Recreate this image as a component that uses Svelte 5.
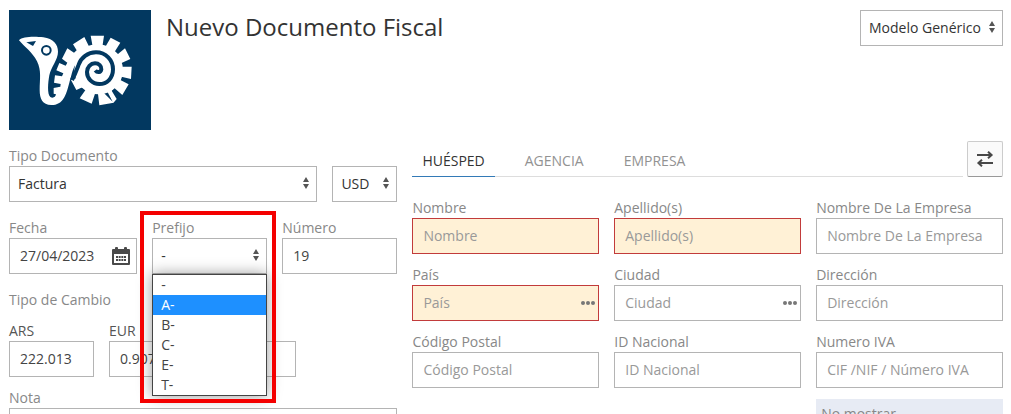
<script>
  const prefixes = ['-', 'A-', 'B-', 'C-', 'E-', 'T-'];
  let prefix = $state('-');
  let highlighted = $state('A-');
  let tab = $state('HUÉSPED');
  const tabs = ['HUÉSPED', 'AGENCIA', 'EMPRESA'];
  const guestFields = [
    { id: 'nombre', label: 'Nombre', required: true },
    { id: 'apellidos', label: 'Apellido(s)', required: true },
    { id: 'empresa', label: 'Nombre De La Empresa' },
    { id: 'pais', label: 'País', required: true, lookup: true },
    { id: 'ciudad', label: 'Ciudad', lookup: true },
    { id: 'direccion', label: 'Dirección' },
    { id: 'postal', label: 'Código Postal' },
    { id: 'nacional', label: 'ID Nacional' },
    { id: 'iva', label: 'Numero IVA', placeholder: 'CIF /NIF / Número IVA' }
  ];
</script>

<main>
  <header>
    <svg class="logo" viewBox="27 30 426 360" aria-hidden="true">
      <rect x="27" y="30" width="426" height="360" fill="#023860" />
      <path
        fill="#fff"
        d="M57 121C68 108 108 110 130 112C160 116 174 134 174 155C174 180 153 200 148 226C144 248 141 283 151 291C159 296 167 291 168 283L161 281L161 264L181 260L182 252L162 248L165 226L186 229L190 220L169 211L178 189L197 197L202 188L186 176L202 145L222 158L230 151L219 133L253 111L266 137L277 134L272 107L312 107L308 134L318 137L332 113L361 128L345 154L354 162L375 145L391 177L363 190L366 200L395 200L393 237L364 230L361 240L386 253L367 285L343 264L335 272L350 297L340 309L321 273L311 278L341 308L298 316L294 282L285 281L275 311L239 295L258 268L249 261L229 270L213 240L236 232C232 197 249 171 278 167C220 170 220 210 208 248C198 285 190 315 154 315C127 315 119 296 119 270C119 238 125 212 111 184C96 155 75 143 57 121Z"
      />
      <circle cx="296" cy="210" r="73" fill="#fff" />
      <path
        d="M216 240C226 222 230 210 236 194C243 173 263 157 288 157C318 157 339 180 339 208C339 235 321 252 298 252C276 252 261 235 261 216C261 201 272 190 285 190C297 190 305 198 304 208C302 218 292 219 286 211"
        fill="none"
        stroke="#023860"
        stroke-width="12"
      />
      <path d="M79 127L108 123L99 138Z" fill="#023860" />
      <circle cx="139" cy="151" r="13" fill="#fff" stroke="#023860" stroke-width="6" />
    </svg>
    <h1>Nuevo Documento Fiscal</h1>
    <select class="model" aria-label="Modelo"><option>Modelo Genérico</option></select>
  </header>

  <div class="columns">
    <section class="document">
      <div class="row type">
        <div class="field">
          <label for="tipo">Tipo Documento</label>
          <select id="tipo"><option>Factura</option></select>
        </div>
        <select class="currency" aria-label="Moneda"><option>USD</option></select>
      </div>

      <div class="row number">
        <div class="field">
          <label for="fecha">Fecha</label>
          <div class="control">
            <input id="fecha" value="27/04/2023" />
            <button class="inside calendar" aria-label="Calendario">
              <svg width="18" height="18" viewBox="0 0 18 18">
                <path
                  fill="#4a4a4a"
                  fill-rule="evenodd"
                  d="M1 2H3V1Q3 0 4 0H5Q6 0 6 1V2H12V1Q12 0 13 0H14Q15 0 15 1V2H17Q18 2 18 3V17Q18 18 17 18H1Q0 18 0 17V3Q0 2 1 2ZM2 7V16H16V7Z"
                />
                <path d="M4 10H14M4 13H14" stroke="#4a4a4a" stroke-width="2" stroke-dasharray="2 0.67" />
              </svg>
            </button>
          </div>
        </div>
        <div class="field prefix">
          <label for="prefijo">Prefijo</label>
          <select id="prefijo" bind:value={prefix}>
            {#each prefixes as p}<option>{p}</option>{/each}
          </select>
          <div class="menu" role="listbox" aria-label="Prefijo">
            {#each prefixes as p}
              <button
                role="option"
                aria-selected={p === prefix}
                class:highlighted={p === highlighted}
                onmouseenter={() => (highlighted = p)}
                onclick={() => (prefix = p)}>{p}</button>
            {/each}
          </div>
          <div class="frame"></div>
        </div>
        <div class="field">
          <label for="numero">Número</label>
          <input id="numero" value="19" />
        </div>
      </div>

      <h2>Tipo de Cambio</h2>
      <div class="row rates">
        <div class="field dark">
          <label for="ars">ARS</label>
          <input id="ars" value="222.013" />
        </div>
        <div class="field dark">
          <label for="eur">EUR</label>
          <input id="eur" value="0.907" />
        </div>
      </div>

      <div class="field note">
        <label for="nota">Nota</label>
        <textarea id="nota" rows="3"></textarea>
      </div>
    </section>

    <section class="customer">
      <div class="tabbar">
        <div class="tabs" role="tablist">
          {#each tabs as t}
            <button role="tab" aria-selected={t === tab} class:active={t === tab} onclick={() => (tab = t)}>{t}</button>
          {/each}
        </div>
        <button class="swap" aria-label="Intercambiar">
          <svg width="18" height="16" viewBox="0 0 18 16" fill="none" stroke="#484848" stroke-width="2">
            <path d="M1 4H16M12 0.700L15.600 4L12 7.300M17 12H2M6 8.700L2.400 12L6 15.300" />
          </svg>
        </button>
      </div>
      <div class="guest">
        {#each guestFields as f}
          <div class="field">
            <label for={f.id}>{f.label}</label>
            <div class="control">
              <input id={f.id} class:required={f.required} placeholder={f.placeholder ?? f.label} />
              {#if f.lookup}
                <button class="inside lookup" aria-label="Buscar {f.label}">
                  <svg width="14" height="4" viewBox="0 0 14 4" fill="#777">
                    <circle cx="2" cy="2" r="2" /><circle cx="7" cy="2" r="2" /><circle cx="12" cy="2" r="2" />
                  </svg>
                </button>
              {/if}
            </div>
          </div>
        {/each}
        <div class="notice">No mostrar</div>
      </div>
    </section>
  </div>
</main>

<style>
  :global(body) {
    margin: 0;
    background: #fff;
  }
  main,
  button,
  input,
  select,
  textarea {
    font: 14px/20px 'Open Sans', 'Noto Sans', sans-serif;
  }
  main {
    height: 100vh;
    box-sizing: border-box;
    overflow: hidden;
    padding: 10px 8px 0 9px;
    color: #333;
  }
  header {
    display: flex;
    align-items: flex-start;
    gap: 15px;
  }
  .logo {
    width: 142px;
    height: 120px;
    flex: none;
  }
  h1 {
    flex: 1;
    margin: 0;
    font-size: 24px;
    line-height: 34px;
    font-weight: 400;
  }
  h2 {
    margin: 0 0 11px;
    font-size: 14px;
    font-weight: 400;
    color: #888;
  }
  .columns {
    display: grid;
    grid-template-columns: 388fr 590fr;
    gap: 15px;
    padding-top: 11px;
  }
  .document {
    padding-top: 5px;
  }
  .row {
    display: grid;
    gap: 15px;
    align-items: end;
    margin-bottom: 16px;
  }
  .type {
    grid-template-columns: 1fr 65px;
  }
  .number {
    grid-template-columns: 128fr 115fr 115fr;
  }
  .rates {
    grid-template-columns: 85fr 187fr 86fr;
    margin-bottom: 11px;
  }
  .field {
    min-width: 0;
  }
  label {
    display: block;
    color: #888;
    white-space: nowrap;
  }
  .dark label {
    color: #555;
  }
  input,
  select,
  textarea {
    display: block;
    box-sizing: border-box;
    width: 100%;
    height: 36px;
    margin: 0;
    padding: 0 10px;
    border: 1px solid #b4b4b4;
    border-radius: 0;
    background: #fff;
    color: #444;
    outline: 0;
  }
  input {
    padding-bottom: 2px;
  }
  textarea {
    height: 80px;
  }
  select {
    appearance: none;
    padding: 0 8px;
    color: #333;
    background: #fff
      url("data:image/svg+xml,%3Csvg xmlns='http://www.w3.org/2000/svg' width='6' height='12'%3E%3Cpath d='M0 5L3 0L6 5ZM0 7L3 12L6 7Z' fill='%23555'/%3E%3C/svg%3E")
      no-repeat right 7px top 10px;
  }
  .model {
    width: auto;
    padding-right: 21px;
  }
  input::placeholder {
    color: #999;
    opacity: 1;
  }
  .required {
    background: #fff1d6;
    border-color: #c23b3b;
  }
  .control {
    position: relative;
  }
  button {
    padding: 0;
    border: 0;
    background: none;
    cursor: pointer;
  }
  .inside {
    position: absolute;
    top: 0;
    right: 4px;
    height: 36px;
    display: flex;
    align-items: center;
  }
  .calendar {
    right: 7px;
  }
  .prefix {
    position: relative;
  }
  .menu {
    position: absolute;
    z-index: 2;
    top: 56px;
    left: 0;
    right: 0;
    border: 1px solid #444;
    background: #fff;
    box-shadow: 0 0 14px rgba(0, 0, 0, 0.4);
  }
  .menu button {
    display: block;
    width: 100%;
    height: 20px;
    padding: 0 8px;
    text-align: left;
    color: #444;
  }
  .menu .highlighted {
    background: #1e90ff;
    color: #fff;
  }
  .frame {
    position: absolute;
    z-index: 3;
    top: -7px;
    left: -12px;
    right: -9px;
    height: 184px;
    border: 4px solid #f40000;
    pointer-events: none;
  }
  .tabbar {
    display: flex;
    gap: 4px;
  }
  .tabs {
    flex: 1;
    display: flex;
    gap: 20px;
    border-bottom: 1px solid #ddd;
    padding-top: 4px;
  }
  .tabs button {
    padding: 0 10px;
    margin-bottom: -1px;
    color: #929292;
    border-bottom: 1px solid transparent;
  }
  .tabs .active {
    color: #333;
    border-color: #337ab7;
  }
  .swap {
    box-sizing: border-box;
    width: 36px;
    height: 36px;
    display: grid;
    place-items: center;
    border: 1px solid #ccc;
    border-bottom-color: #999;
    border-radius: 2px;
    background: #fafafa;
  }
  .guest {
    display: grid;
    grid-template-columns: repeat(3, minmax(0, 1fr));
    gap: 11px 15px;
    padding-top: 21px;
  }
  .notice {
    grid-column: 3;
    padding: 5px;
    color: #888;
    background: #e7ebf4;
  }
</style>
